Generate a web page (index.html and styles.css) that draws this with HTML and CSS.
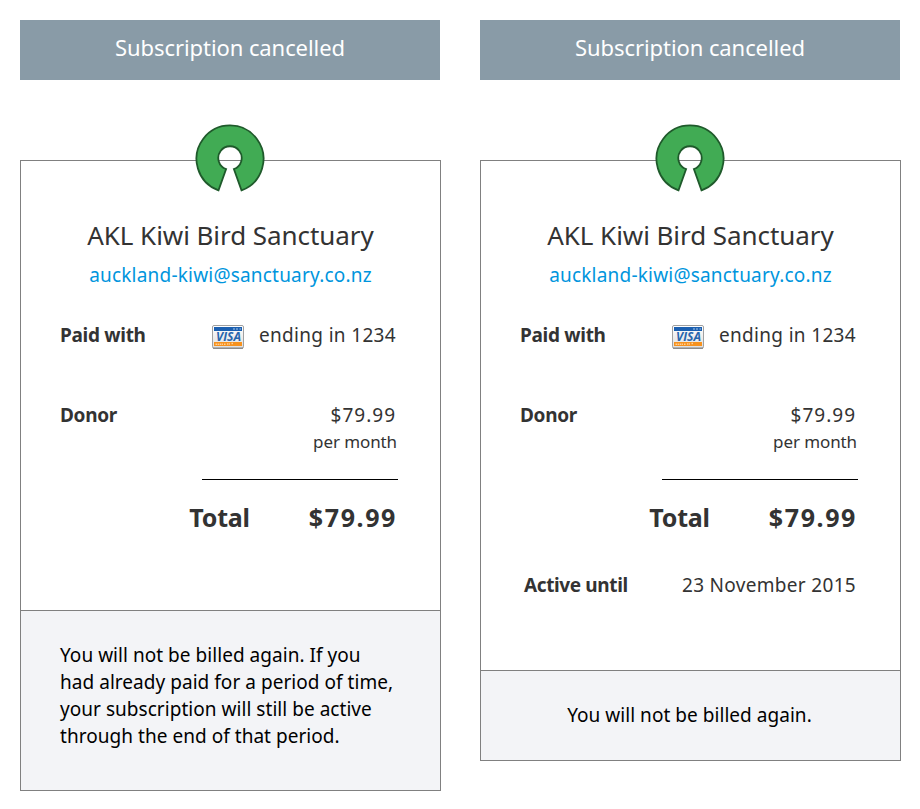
FILE: index.html
```
<!DOCTYPE html>
<html lang="en">
<head>
<meta charset="utf-8">
<title>Subscription cancelled</title>
<link rel="stylesheet" href="styles.css">
</head>
<body>
<svg class="defs" aria-hidden="true">
  <defs>
    <linearGradient id="card-bg" x1="0" y1="0" x2="0" y2="1">
      <stop offset="0" stop-color="#ffffff"/><stop offset="1" stop-color="#dedede"/>
    </linearGradient>
    <symbol id="keyhole" viewBox="0 0 70 70">
      <path d="M23.5 67.4A33.5 33.5 0 1 1 46.5 67.4L38.9 46A11.7 11.7 0 1 0 31.1 46Z" fill="#41ab54" stroke="#1f5a2b" stroke-width="1.8"/>
    </symbol>
    <symbol id="visa" viewBox="0 0 32 24">
      <rect x=".5" y=".5" width="31" height="22.7" rx="1.5" fill="url(#card-bg)" stroke="#a0a0a0"/>
      <path d="M1 23.2H31" stroke="#777"/>
      <path d="M2 2H30V6H2Z" fill="#1b5fb0"/>
      <path d="M2 17H30V21H2Z" fill="#f7921e"/>
      <path d="M21 4H23M24 4H26M27.5 4H29" stroke="#a9c8e8" stroke-width="1"/>
      <path d="M3.5 19.3H11M12 19.3H14M15 19H18M19.5 18.5H21" stroke="#fbd09a" stroke-width="1.5" stroke-dasharray="1.5 .6"/>
      <text x="4" y="15.9" class="visa-word" textLength="25" lengthAdjust="spacingAndGlyphs">VISA</text>
    </symbol>
  </defs>
</svg>
<main class="columns">
  <section class="column">
    <header class="banner">Subscription cancelled</header>
    <article class="card">
      <svg class="logo"><use href="#keyhole"/></svg>
      <div class="details">
        <h1 class="name">AKL Kiwi Bird Sanctuary</h1>
        <a class="email">auckland-kiwi@sanctuary.co.nz</a>
        <div class="row payment"><b>Paid with</b><span class="method"><svg class="visa"><use href="#visa"/></svg><span class="ending">ending in 1234</span></span></div>
        <div class="row"><b>Donor</b><span class="amount">$79.99</span></div>
        <div class="period">per month</div>
        <div class="rule"></div>
        <div class="total"><b>Total</b><b class="sum">$79.99</b></div>
      </div>
      <footer class="note"><p>You will not be billed again. If you<br>had already paid for a period of time,<br>your subscription will still be active<br>through the end of that period.</p></footer>
    </article>
  </section>
  <section class="column">
    <header class="banner">Subscription cancelled</header>
    <article class="card">
      <svg class="logo"><use href="#keyhole"/></svg>
      <div class="details details-tall">
        <h1 class="name">AKL Kiwi Bird Sanctuary</h1>
        <a class="email">auckland-kiwi@sanctuary.co.nz</a>
        <div class="row payment"><b>Paid with</b><span class="method"><svg class="visa"><use href="#visa"/></svg><span class="ending">ending in 1234</span></span></div>
        <div class="row"><b>Donor</b><span class="amount">$79.99</span></div>
        <div class="period">per month</div>
        <div class="rule"></div>
        <div class="total"><b>Total</b><b class="sum">$79.99</b></div>
        <div class="row active"><b>Active until</b><span class="date">23 November 2015</span></div>
      </div>
      <footer class="note note-short"><p>You will not be billed again.</p></footer>
    </article>
  </section>
</main>
</body>
</html>
```
FILE: styles.css
```
* { box-sizing: border-box; }
body { margin: 0; background: #fff; color: #333; font: 19px/30px "Noto Sans", sans-serif; white-space: nowrap; overflow: hidden; }
.defs { display: block; width: 0; height: 0; }
.columns { display: flex; gap: 40px; padding: 20px 0 0 20px; align-items: flex-start; }
.column { width: 420px; flex: none; }
.banner { height: 60px; background: #899ba7; color: #fff; font-size: 22px; line-height: 54px; letter-spacing: -.08px; text-align: center; }
.card { position: relative; width: 421px; margin-top: 80px; border: 1px solid #808080; }
.logo { position: absolute; left: 174px; top: -38.5px; width: 70px; height: 70px; }
.details { height: 449px; padding: 54px 44px 0 39px; }
.details-tall { height: 509px; }
.name { margin: 0 -3px 0 2px; font-size: 26px; font-weight: 400; line-height: 40px; letter-spacing: -.06px; text-align: center; }
.email { display: block; height: 40px; line-height: 41px; text-align: center; color: #0095dd; letter-spacing: .2px; margin: 0 -3px 0 2px; }
.row { display: flex; justify-content: space-between; }
.row b { letter-spacing: -.3px; }
.payment { margin: 25px 0 50px; }
.method { display: flex; align-items: center; gap: 15px; }
.visa { width: 32px; height: 24px; margin-top: 3px; }
.visa-word { font: italic 700 11.5px "Open Sans", sans-serif; fill: #2865ad; }
.ending { letter-spacing: .33px; }
.amount { letter-spacing: 1px; }
.period { height: 24px; font-size: 17px; line-height: 24px; letter-spacing: -.1px; text-align: right; margin-right: -1px; }
.rule { width: 196px; height: 1px; margin: 25px -2px 0 auto; background: #000; }
.total { display: flex; justify-content: flex-end; gap: 59px; height: 30px; margin-top: 22px; font-size: 25px; }
.total b { letter-spacing: -.2px; }
.total .sum { letter-spacing: 1.6px; margin-right: -1px; }
.active { margin-top: 38px; padding-left: 4px; }
.active b { letter-spacing: -.38px; }
.date { letter-spacing: .31px; }
.note { height: 180px; border-top: 1px solid #808080; background: #f3f4f7; color: #000; padding: 31px 39px; line-height: 27px; letter-spacing: .04px; }
.note p { margin: 0; }
.note-short { height: 90px; text-align: center; padding-left: 37px; }
```
